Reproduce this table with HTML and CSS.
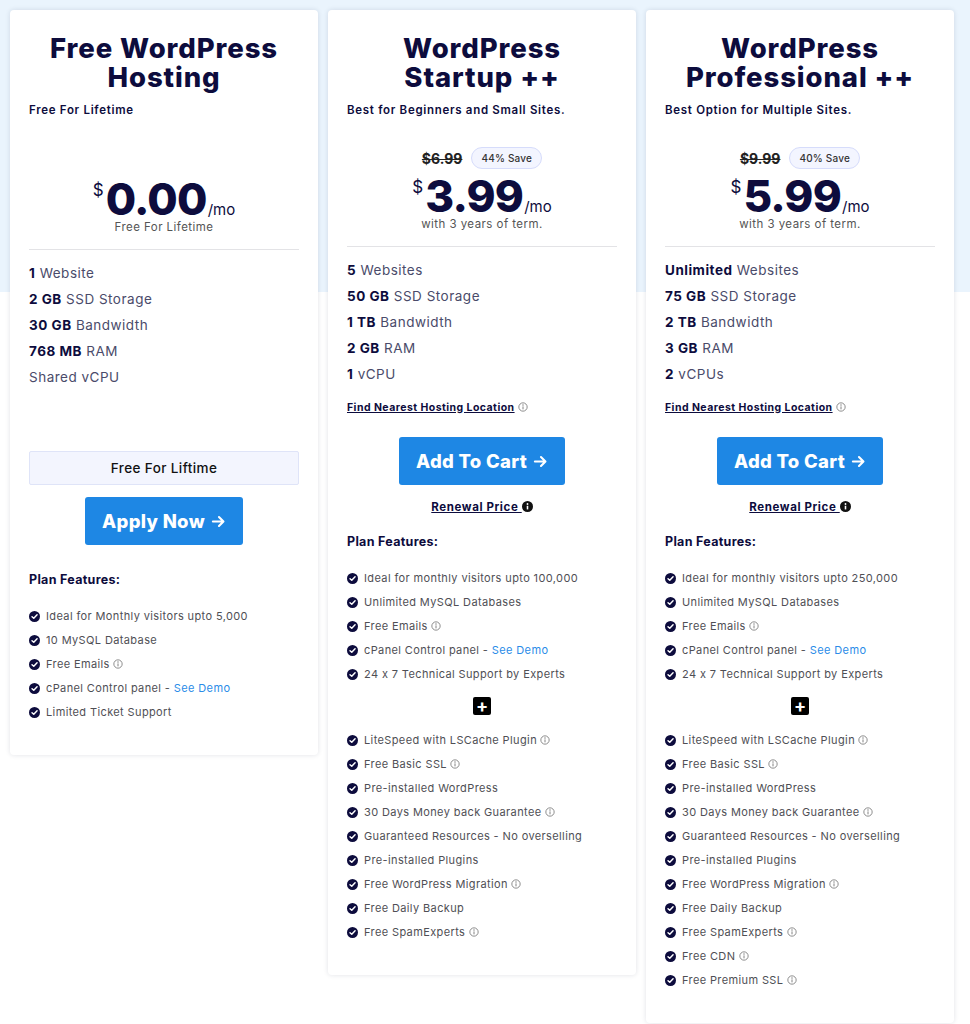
FILE: index.html
```html
<!DOCTYPE html>
<html lang="en">
<head>
  <meta charset="UTF-8" />
  <meta name="viewport" content="width=device-width, initial-scale=1.0"/>
  <title>WordPress Hosting Plans</title>
  <link rel="stylesheet" href="styles.css">
</head>
<body>
  <!-- shared icons -->
  <svg class="defs" width="0" height="0">
    <symbol id="check" viewBox="0 0 12 12">
      <circle cx="6" cy="6" r="6" fill="#0d0c3d"/>
      <path d="M3.3 6.2 L5.2 8 L8.8 4.2" fill="none" stroke="#fff" stroke-width="1.6" stroke-linecap="round" stroke-linejoin="round"/>
    </symbol>
    <symbol id="info" viewBox="0 0 12 12">
      <circle cx="6" cy="6" r="5" fill="none" stroke="#777" stroke-width="1"/>
      <circle cx="6" cy="3.6" r="0.8" fill="#777"/>
      <path d="M6 5.3 V8.8" stroke="#777" stroke-width="1.1"/>
    </symbol>
    <symbol id="info-solid" viewBox="0 0 12 12">
      <circle cx="6" cy="6" r="6" fill="#111"/>
      <circle cx="6" cy="3.3" r="1" fill="#fff"/>
      <path d="M6 5.2 V9.2" stroke="#fff" stroke-width="1.7"/>
    </symbol>
    <symbol id="arrow" viewBox="0 0 16 16">
      <path d="M2 8 H13 M8.5 3.2 L13.3 8 L8.5 12.8" fill="none" stroke="#fff" stroke-width="2.2" stroke-linecap="round" stroke-linejoin="round"/>
    </symbol>
  </svg>

  <div class="plans">

    <!-- Free plan -->
    <div class="card card-free">
      <h2>Free WordPress Hosting</h2>
      <p class="sub">Free For Lifetime</p>
      <div class="old-row">
        <s class="old">$0.00</s><span class="save">0% Save</span>
      </div>
      <div class="price"><span class="cur">$</span><span class="amount">0.00</span><span class="per">/mo</span></div>
      <p class="term">Free For Lifetime</p>
      <hr>
      <ul class="specs">
        <li><b>1</b> Website</li>
        <li><b>2 GB</b> SSD Storage</li>
        <li><b>30 GB</b> Bandwidth</li>
        <li><b>768 MB</b> RAM</li>
        <li>Shared vCPU</li>
      </ul>
      <div class="free-box">Free For Liftime</div>
      <a class="btn" href="#">Apply Now <svg class="arr"><use href="#arrow"/></svg></a>
      <h4>Plan Features:</h4>
      <ul class="features">
        <li><svg class="ck"><use href="#check"/></svg>Ideal for Monthly visitors upto 5,000</li>
        <li><svg class="ck"><use href="#check"/></svg>10 MySQL Database</li>
        <li><svg class="ck"><use href="#check"/></svg>Free Emails <svg class="i"><use href="#info"/></svg></li>
        <li><svg class="ck"><use href="#check"/></svg>cPanel Control panel - <a href="#">See Demo</a></li>
        <li><svg class="ck"><use href="#check"/></svg>Limited Ticket Support</li>
      </ul>
    </div>

    <!-- Startup plan -->
    <div class="card">
      <h2>WordPress Startup ++</h2>
      <p class="sub">Best for Beginners and Small Sites.</p>
      <div class="old-row">
        <s class="old">$6.99</s><span class="save">44% Save</span>
      </div>
      <div class="price"><span class="cur">$</span><span class="amount">3.99</span><span class="per">/mo</span></div>
      <p class="term">with 3 years of term.</p>
      <hr>
      <ul class="specs">
        <li><b>5</b> Websites</li>
        <li><b>50 GB</b> SSD Storage</li>
        <li><b>1 TB</b> Bandwidth</li>
        <li><b>2 GB</b> RAM</li>
        <li><b>1</b> vCPU</li>
      </ul>
      <p class="nearest"><a href="#">Find Nearest Hosting Location</a> <svg class="i"><use href="#info"/></svg></p>
      <a class="btn" href="#">Add To Cart <svg class="arr"><use href="#arrow"/></svg></a>
      <p class="renew"><a href="#">Renewal Price <svg class="i-solid"><use href="#info-solid"/></svg></a></p>
      <h4>Plan Features:</h4>
      <ul class="features">
        <li><svg class="ck"><use href="#check"/></svg>Ideal for monthly visitors upto 100,000</li>
        <li><svg class="ck"><use href="#check"/></svg>Unlimited MySQL Databases</li>
        <li><svg class="ck"><use href="#check"/></svg>Free Emails <svg class="i"><use href="#info"/></svg></li>
        <li><svg class="ck"><use href="#check"/></svg>cPanel Control panel - <a href="#">See Demo</a></li>
        <li><svg class="ck"><use href="#check"/></svg>24 x 7 Technical Support by Experts</li>
      </ul>
      <div class="more"><span class="plus">+</span></div>
      <ul class="features extra">
        <li><svg class="ck"><use href="#check"/></svg>LiteSpeed with LSCache Plugin <svg class="i"><use href="#info"/></svg></li>
        <li><svg class="ck"><use href="#check"/></svg>Free Basic SSL <svg class="i"><use href="#info"/></svg></li>
        <li><svg class="ck"><use href="#check"/></svg>Pre-installed WordPress</li>
        <li><svg class="ck"><use href="#check"/></svg>30 Days Money back Guarantee <svg class="i"><use href="#info"/></svg></li>
        <li><svg class="ck"><use href="#check"/></svg>Guaranteed Resources - No overselling</li>
        <li><svg class="ck"><use href="#check"/></svg>Pre-installed Plugins</li>
        <li><svg class="ck"><use href="#check"/></svg>Free WordPress Migration <svg class="i"><use href="#info"/></svg></li>
        <li><svg class="ck"><use href="#check"/></svg>Free Daily Backup</li>
        <li><svg class="ck"><use href="#check"/></svg>Free SpamExperts <svg class="i"><use href="#info"/></svg></li>
      </ul>
    </div>

    <!-- Professional plan -->
    <div class="card">
      <h2>WordPress Professional ++</h2>
      <p class="sub">Best Option for Multiple Sites.</p>
      <div class="old-row">
        <s class="old">$9.99</s><span class="save">40% Save</span>
      </div>
      <div class="price"><span class="cur">$</span><span class="amount">5.99</span><span class="per">/mo</span></div>
      <p class="term">with 3 years of term.</p>
      <hr>
      <ul class="specs">
        <li><b>Unlimited</b> Websites</li>
        <li><b>75 GB</b> SSD Storage</li>
        <li><b>2 TB</b> Bandwidth</li>
        <li><b>3 GB</b> RAM</li>
        <li><b>2</b> vCPUs</li>
      </ul>
      <p class="nearest"><a href="#">Find Nearest Hosting Location</a> <svg class="i"><use href="#info"/></svg></p>
      <a class="btn" href="#">Add To Cart <svg class="arr"><use href="#arrow"/></svg></a>
      <p class="renew"><a href="#">Renewal Price <svg class="i-solid"><use href="#info-solid"/></svg></a></p>
      <h4>Plan Features:</h4>
      <ul class="features">
        <li><svg class="ck"><use href="#check"/></svg>Ideal for monthly visitors upto 250,000</li>
        <li><svg class="ck"><use href="#check"/></svg>Unlimited MySQL Databases</li>
        <li><svg class="ck"><use href="#check"/></svg>Free Emails <svg class="i"><use href="#info"/></svg></li>
        <li><svg class="ck"><use href="#check"/></svg>cPanel Control panel - <a href="#">See Demo</a></li>
        <li><svg class="ck"><use href="#check"/></svg>24 x 7 Technical Support by Experts</li>
      </ul>
      <div class="more"><span class="plus">+</span></div>
      <ul class="features extra">
        <li><svg class="ck"><use href="#check"/></svg>LiteSpeed with LSCache Plugin <svg class="i"><use href="#info"/></svg></li>
        <li><svg class="ck"><use href="#check"/></svg>Free Basic SSL <svg class="i"><use href="#info"/></svg></li>
        <li><svg class="ck"><use href="#check"/></svg>Pre-installed WordPress</li>
        <li><svg class="ck"><use href="#check"/></svg>30 Days Money back Guarantee <svg class="i"><use href="#info"/></svg></li>
        <li><svg class="ck"><use href="#check"/></svg>Guaranteed Resources - No overselling</li>
        <li><svg class="ck"><use href="#check"/></svg>Pre-installed Plugins</li>
        <li><svg class="ck"><use href="#check"/></svg>Free WordPress Migration <svg class="i"><use href="#info"/></svg></li>
        <li><svg class="ck"><use href="#check"/></svg>Free Daily Backup</li>
        <li><svg class="ck"><use href="#check"/></svg>Free SpamExperts <svg class="i"><use href="#info"/></svg></li>
        <li><svg class="ck"><use href="#check"/></svg>Free CDN <svg class="i"><use href="#info"/></svg></li>
        <li><svg class="ck"><use href="#check"/></svg>Free Premium SSL <svg class="i"><use href="#info"/></svg></li>
      </ul>
    </div>

  </div>
</body>
</html>
```

FILE: styles.css
```css
body {
  margin: 0;
  font-family: Inter, "Noto Sans", sans-serif;
  font-feature-settings: "calt" 0;
  color: #0d0c3d;
  background: linear-gradient(180deg, #eaf4fd 0, #eaf4fd 292px, #ffffff 292px);
}

.defs {
  position: absolute;
}

.plans {
  display: flex;
  align-items: flex-start;
  gap: 10px;
  padding: 10px;
}

.card {
  width: 308px;
  box-sizing: border-box;
  padding: 24px 19px 31px;
  background: #fff;
  border-radius: 4px;
  box-shadow: 0 0 5px rgba(20, 30, 60, 0.13);
}

h2 {
  margin: 0;
  text-align: center;
  font-size: 27.5px;
  line-height: 29px;
  font-weight: 800;
  letter-spacing: 0.9px;
}

.sub {
  margin: 10px 0 0;
  font-size: 11.5px;
  line-height: 16px;
  font-weight: 600;
  letter-spacing: 0.7px;
}

.old-row {
  margin-top: 29px;
  height: 22px;
  display: flex;
  justify-content: center;
  align-items: center;
  gap: 9px;
}

.card-free .old-row {
  visibility: hidden;
  margin-top: 32px;
}

.old {
  font-size: 14px;
  font-weight: 700;
  color: #222;
}

.save {
  font-size: 10px;
  font-weight: 500;
  color: #333;
  background: #f3f5ff;
  border: 1px solid #d6dcfb;
  border-radius: 11px;
  padding: 4px 9px;
  letter-spacing: 0.2px;
}

.price {
  margin-top: 7px;
  height: 40px;
  display: flex;
  justify-content: center;
  align-items: baseline;
  line-height: 40px;
}

.cur {
  font-size: 17px;
  align-self: flex-start;
  line-height: 22px;
  margin-right: 2px;
}

.amount {
  font-size: 44px;
  font-weight: 800;
  letter-spacing: -0.8px;
}

.per {
  font-size: 15px;
  margin-left: 1px;
}

.term {
  margin: 0;
  text-align: center;
  font-size: 11.5px;
  line-height: 16px;
  color: #555;
  letter-spacing: 0.45px;
}

hr {
  margin: 14px 0 0;
  border: 0;
  border-top: 1px solid #e3e3e6;
}

.specs {
  list-style: none;
  margin: 10px 0 0;
  padding: 0;
}

.specs li {
  font-size: 13.5px;
  line-height: 26px;
  color: #4a4b6a;
  letter-spacing: 0.5px;
}

.specs b {
  color: #0d0c3d;
  font-weight: 700;
}

.nearest {
  margin: 13px 0 0;
  font-size: 10.5px;
  line-height: 16px;
  font-weight: 700;
  letter-spacing: 0.45px;
}

.nearest a,
.renew a {
  color: #0d0c3d;
  text-decoration: underline;
}

.btn {
  display: flex;
  align-items: center;
  gap: 6px;
  width: fit-content;
  margin: 21px auto 0;
  height: 48px;
  box-sizing: border-box;
  padding: 0 17px;
  background: #1e87e4;
  color: #fff;
  font-size: 18.5px;
  font-weight: 800;
  letter-spacing: 0.3px;
  text-decoration: none;
  border-radius: 3px;
}

.arr {
  width: 15px;
  height: 15px;
}

.card-free .btn {
  margin-top: 12px;
}

.renew {
  margin: 14px 0 0;
  text-align: center;
  font-size: 11.5px;
  line-height: 16px;
  font-weight: 700;
  letter-spacing: 0.6px;
}

.i {
  width: 10px;
  height: 10px;
  vertical-align: -1px;
}

.i-solid {
  width: 11px;
  height: 11px;
  vertical-align: -1px;
}

.free-box {
  margin-top: 61px;
  height: 34px;
  box-sizing: border-box;
  background: #f3f5fe;
  border: 1px solid #dfe4f8;
  border-radius: 2px;
  text-align: center;
  line-height: 32px;
  font-size: 13.5px;
  font-weight: 500;
  letter-spacing: 0.4px;
  color: #111;
}

h4 {
  margin: 18px 0 0;
  font-size: 12.5px;
  line-height: 18px;
  font-weight: 700;
  letter-spacing: 0.3px;
}

.card-free h4 {
  margin-top: 26px;
}

.features {
  list-style: none;
  margin: 15px 0 0;
  padding: 0;
}

.features li {
  font-size: 11px;
  line-height: 24px;
  color: #4f4f55;
  letter-spacing: 0.38px;
  white-space: nowrap;
}

.ck {
  width: 11px;
  height: 11px;
  margin-right: 6px;
  vertical-align: -1.5px;
}

.features a {
  color: #2a8ce8;
  text-decoration: none;
}

.more {
  margin-top: 11px;
  display: flex;
  justify-content: center;
}

.plus {
  width: 18px;
  height: 18px;
  border-radius: 2px;
  background: #000;
  color: #fff;
  font-size: 18px;
  font-weight: 700;
  line-height: 18px;
  text-align: center;
}

.features.extra {
  margin-top: 13px;
}
```
